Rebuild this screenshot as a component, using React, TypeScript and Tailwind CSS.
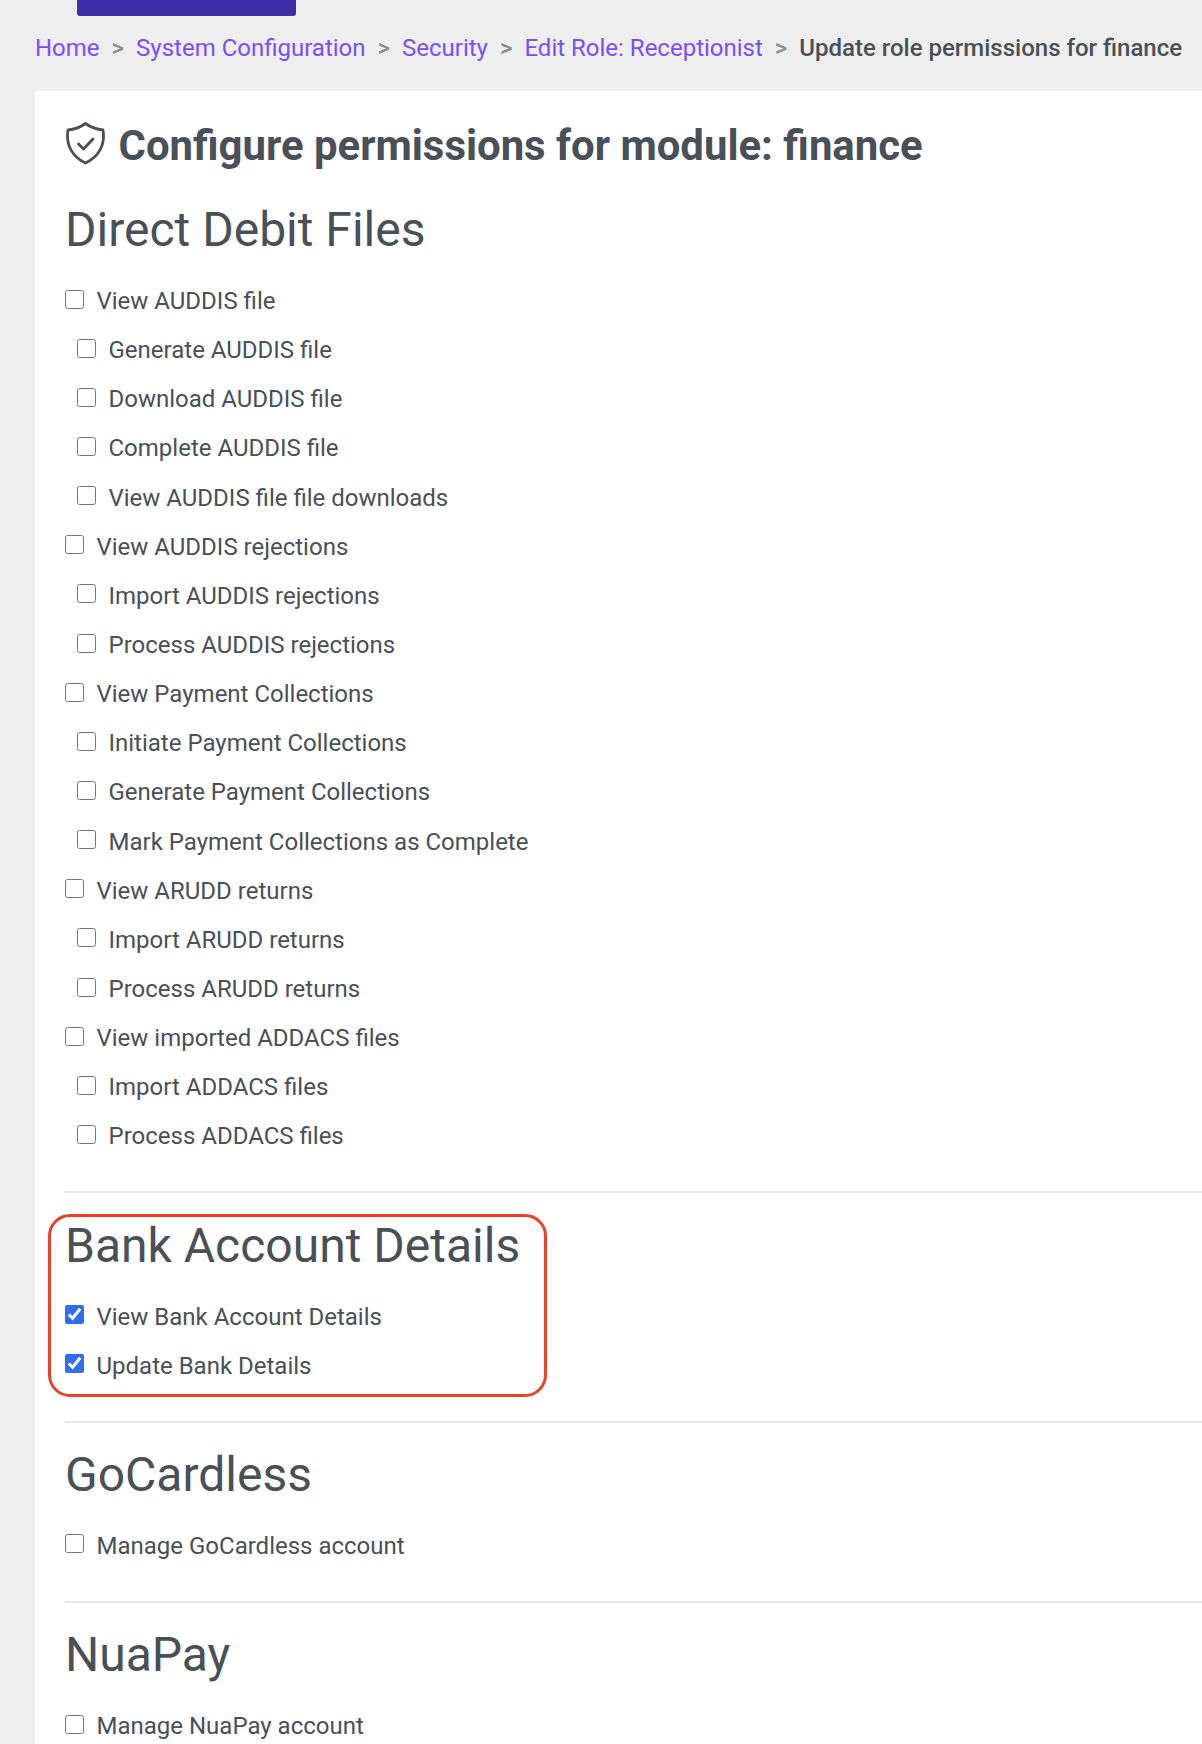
const font = "font-['Roboto',sans-serif]";

type Perm = { label: string; sub?: boolean; checked?: boolean };

const debitPerms: Perm[] = [
  { label: "View AUDDIS file" },
  { label: "Generate AUDDIS file", sub: true },
  { label: "Download AUDDIS file", sub: true },
  { label: "Complete AUDDIS file", sub: true },
  { label: "View AUDDIS file file downloads", sub: true },
  { label: "View AUDDIS rejections" },
  { label: "Import AUDDIS rejections", sub: true },
  { label: "Process AUDDIS rejections", sub: true },
  { label: "View Payment Collections" },
  { label: "Initiate Payment Collections", sub: true },
  { label: "Generate Payment Collections", sub: true },
  { label: "Mark Payment Collections as Complete", sub: true },
  { label: "View ARUDD returns" },
  { label: "Import ARUDD returns", sub: true },
  { label: "Process ARUDD returns", sub: true },
  { label: "View imported ADDACS files" },
  { label: "Import ADDACS files", sub: true },
  { label: "Process ADDACS files", sub: true },
];

function Row({ label, sub, checked }: Perm) {
  return (
    <label className={`h-[49.15px] flex items-center ${sub ? "pl-[12px]" : ""}`}>
      <input
        type="checkbox"
        defaultChecked={checked}
        className="w-[19px] h-[19px] m-0 mr-[12.5px] -translate-y-[2px] accent-[#2f6fed]"
      />
      <span className="text-[24px] text-[#495057] whitespace-nowrap">{label}</span>
    </label>
  );
}

function Section({ title, perms, highlight }: { title: string; perms: Perm[]; highlight?: boolean }) {
  return (
    <section className="relative">
      <h2 className="h-[71px] flex items-center text-[48px] leading-none text-[#495057] whitespace-nowrap">{title}</h2>
      <div className="pt-[11px]">
        {perms.map((p) => (
          <Row key={p.label} {...p} />
        ))}
      </div>
      {highlight && (
        <div className="absolute left-[-17px] top-[4px] w-[499px] h-[183px] border-[3px] border-[#e8432a] rounded-[22px]" />
      )}
    </section>
  );
}

function Crumb({ children }: { children: string }) {
  return <a className="text-[#7b4ff5]">{children}</a>;
}

function Sep() {
  return <span className="mx-[12px] font-medium text-[#868e96]">&gt;</span>;
}

export default function App() {
  return (
    <div className={`h-[1744px] w-full overflow-hidden bg-[#eeeeee] ${font}`}>
      <div className="ml-[77px] w-[219px] h-[16px] bg-[#3d2fa5] rounded-b-[3px]" />
      <nav className="h-[75px] pl-[35px] pb-[11px] flex items-center text-[24px] whitespace-nowrap">
        <Crumb>Home</Crumb>
        <Sep />
        <Crumb>System Configuration</Crumb>
        <Sep />
        <Crumb>Security</Crumb>
        <Sep />
        <Crumb>Edit Role: Receptionist</Crumb>
        <Sep />
        <span className="font-medium text-[#495057]">Update role permissions for finance</span>
      </nav>
      <main className="ml-[35px] h-[1653px] bg-white rounded-tl-[4px] pl-[30px]">
        <div className="h-[103.5px] pt-[31px] flex items-start gap-[12.5px]">
          <svg viewBox="0 0 41 44" className="w-[41px] h-[44px] -mt-px shrink-0 text-[#495057]" fill="none" stroke="currentColor" strokeWidth="2.8" strokeLinecap="round" strokeLinejoin="round">
            <path d="M20.5 2.5 C26 6.5 31.5 8.5 38 9 C40.5 24 33.5 36 20.5 42 C7.5 36 0.5 24 3 9 C9.5 8.5 15 6.5 20.5 2.5 Z" />
            <path d="M13.5 23 L18.5 28 L28 18" />
          </svg>
          <h1 className="text-[41.9px] leading-[48px] font-bold text-[#495057] whitespace-nowrap">
            Configure permissions for module: finance
          </h1>
        </div>
        <Section title="Direct Debit Files" perms={debitPerms} />
        <hr className="mt-[30px] border-0 h-[2px] bg-[#e6e6e6]" />
        <div className="mt-[17px]">
          <Section
            title="Bank Account Details"
            highlight
            perms={[
              { label: "View Bank Account Details", checked: true },
              { label: "Update Bank Details", checked: true },
            ]}
          />
        </div>
        <hr className="mt-[31px] border-0 h-[2px] bg-[#e6e6e6]" />
        <div className="mt-[16px]">
          <Section title="GoCardless" perms={[{ label: "Manage GoCardless account" }]} />
        </div>
        <hr className="mt-[31px] border-0 h-[2px] bg-[#e6e6e6]" />
        <div className="mt-[16px]">
          <Section title="NuaPay" perms={[{ label: "Manage NuaPay account" }]} />
        </div>
      </main>
    </div>
  );
}
